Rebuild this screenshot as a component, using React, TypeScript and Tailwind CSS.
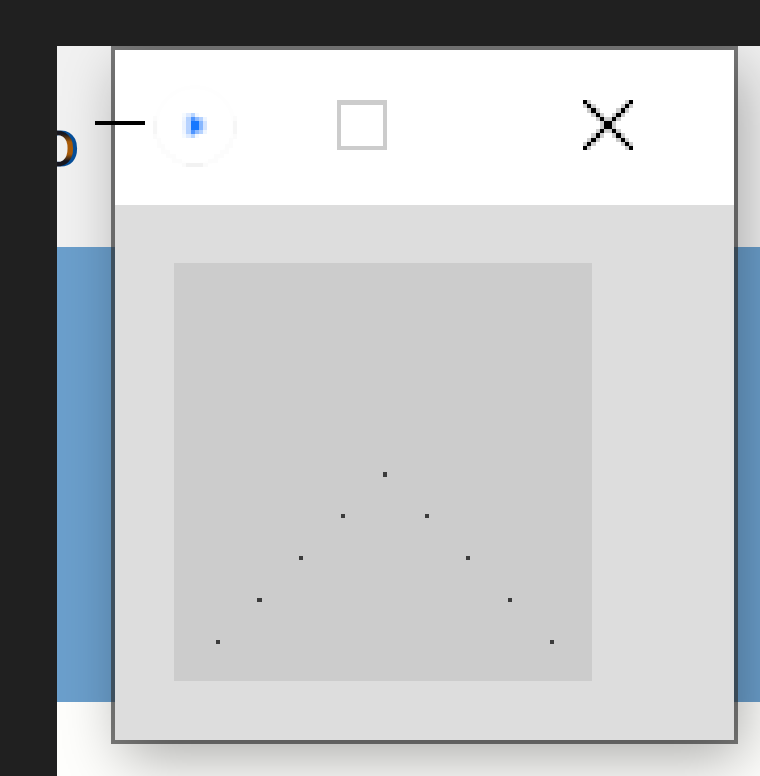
const CELL = 50 / 12;

function CloseIcon() {
  const cells = [];
  for (let r = 0; r < 12; r++) {
    for (let c = 0; c < 12; c++) {
      const a = Math.abs(r - c);
      const b = Math.abs(r + c - 11);
      const fill = a === 0 || b === 0 ? "#000" : a === 1 || b === 1 ? "#ccc" : null;
      if (fill) {
        const x = Math.round(c * CELL);
        const y = Math.round(r * CELL);
        cells.push(
          <rect key={`${r}-${c}`} x={x} y={y} width={Math.round((c + 1) * CELL) - x} height={Math.round((r + 1) * CELL) - y} fill={fill} />
        );
      }
    }
  }
  return (
    <svg width="50" height="50" shapeRendering="crispEdges" className="shrink-0">
      {cells}
    </svg>
  );
}

const outer = ["#f5faff", "#dfebff", "#b8d5ff", "#f3f8ff", "#fff", "#fff"];
const middle = ["#eff5ff", "#b5d2ff", "#4f95ff", "#8ebbff", "#b5d2ff", "#eef5ff"];
const inner = ["#eaf2ff", "#b8d3ff", "#1677ff", "#1677ff", "#87b7ff", "#d5e5ff"];
const playRows = [outer, middle, inner, inner, middle, outer];
const playX = [29, 33, 38, 42, 46, 50, 54];
const playY = [28, 32, 36, 40, 45, 49, 53];

function PlayIcon() {
  return (
    <svg width="84" height="84" shapeRendering="crispEdges" className="shrink-0">
      <circle cx="42" cy="41" r="39" fill="none" stroke="#fefefe" strokeWidth="4" />
      <path d="M2 36v13M82 36v13" stroke="#f6f6f6" strokeWidth="4" />
      <path d="M2 31v5M2 49v5M82 31v5M82 49v5M29 80h4M50 80h5" stroke="#fbfbfb" strokeWidth="4" />
      <path d="M33 80h17" stroke="#f2f2f2" strokeWidth="4" />
      <path d="M6 53v8h4v6h5v4h6v5h8M78 53v8h-4v6h-5v4h-6v5h-8" fill="none" stroke="#fcfcfc" strokeWidth="4" />
      {playRows.map((row, r) =>
        row.map((fill, c) => (
          <rect key={`${r}-${c}`} x={playX[c]} y={playY[r]} width={playX[c + 1] - playX[c]} height={playY[r + 1] - playY[r]} fill={fill} />
        ))
      )}
    </svg>
  );
}

const points = [
  [42, 377, 4, 4],
  [83, 335, 5, 4],
  [125, 293, 4, 4],
  [167, 251, 4, 4],
  [209, 209, 4, 5],
  [251, 251, 4, 4],
  [292, 293, 4, 4],
  [334, 335, 4, 4],
  [376, 377, 4, 4],
];

function Window() {
  return (
    <div className="absolute left-[54px] top-0 h-[698px] w-[627px] border-4 border-[rgba(50,50,50,0.63)]">
      <div className="flex h-full flex-col bg-[#ddd] shadow-[8px_18px_56px_rgba(0,0,0,0.33)]">
        <div className="flex h-[155px] shrink-0 items-start bg-white">
          <div className="-ml-5 mt-[71px] h-1 w-[50px] shrink-0 bg-black" />
          <div className="ml-2 mt-[35px]">
            <PlayIcon />
          </div>
          <div className="ml-[100px] mt-[50px] size-[50px] shrink-0 border-4 border-t-[5px] border-[#ccc]" />
          <div className="ml-[196px] mt-[50px]">
            <CloseIcon />
          </div>
        </div>
        <div className="ml-[59px] mt-[58px] size-[418px] bg-[#ccc]">
          <svg width="418" height="418" shapeRendering="crispEdges">
            {points.map(([x, y, w, h]) => (
              <rect key={x} x={x} y={y} width={w} height={h} fill="#3b3b3b" />
            ))}
          </svg>
        </div>
      </div>
    </div>
  );
}

export default function App() {
  return (
    <div className="h-[776px] w-[760px] overflow-hidden bg-[#202020] pl-[57px] pt-[46px]">
      <div className="relative h-[730px] overflow-hidden bg-[#fefefc]">
        <div className="h-[201px] overflow-hidden bg-[#f1f1f1] pt-[54px]">
          <div className="-ml-[20px] w-16 font-['Open_Sans',sans-serif] text-[66px] leading-[80px]">
            <span className="block bg-[linear-gradient(#171720_34px,#aa5b08_42px,#aa5b08_54px,#171720_61px)] bg-clip-text text-transparent drop-shadow-[4px_0_0_#064f9a]">o</span>
          </div>
        </div>
        <div className="h-[455px] bg-[#6b9fcc]" />
        <Window />
      </div>
    </div>
  );
}
